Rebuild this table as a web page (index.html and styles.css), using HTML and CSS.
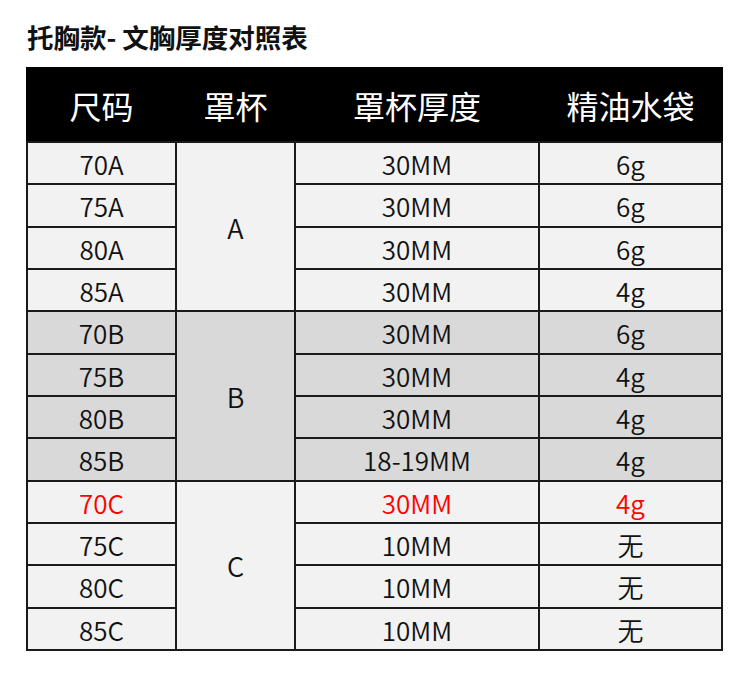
FILE: index.html
```html
<!DOCTYPE html>
<html lang="zh">
<head>
<meta charset="utf-8">
<link rel="stylesheet" href="styles.css">
</head>
<body>
<div class="page">
  <h1 class="title">托胸款- 文胸厚度对照表</h1>
  <table class="chart">
    <colgroup>
      <col class="c1"><col class="c2"><col class="c3"><col class="c4">
    </colgroup>
    <thead>
      <tr><th>尺码</th><th>罩杯</th><th>罩杯厚度</th><th>精油水袋</th></tr>
    </thead>
    <tbody class="grp-a">
      <tr><td>70A</td><td rowspan="4" class="cup">A</td><td>30MM</td><td>6g</td></tr>
      <tr><td>75A</td><td>30MM</td><td>6g</td></tr>
      <tr><td>80A</td><td>30MM</td><td>6g</td></tr>
      <tr><td>85A</td><td>30MM</td><td>4g</td></tr>
    </tbody>
    <tbody class="grp-b">
      <tr><td>70B</td><td rowspan="4" class="cup">B</td><td>30MM</td><td>6g</td></tr>
      <tr><td>75B</td><td>30MM</td><td>4g</td></tr>
      <tr><td>80B</td><td>30MM</td><td>4g</td></tr>
      <tr><td>85B</td><td>18-19MM</td><td>4g</td></tr>
    </tbody>
    <tbody class="grp-c">
      <tr><td class="hot">70C</td><td rowspan="4" class="cup">C</td><td class="hot">30MM</td><td class="hot">4g</td></tr>
      <tr><td>75C</td><td>10MM</td><td>无</td></tr>
      <tr><td>80C</td><td>10MM</td><td>无</td></tr>
      <tr><td>85C</td><td>10MM</td><td>无</td></tr>
    </tbody>
  </table>
</div>
</body>
</html>
```

FILE: styles.css
```css
html, body {
  margin: 0;
  padding: 0;
  background: #ffffff;
}

.page {
  padding: 18px 0 0 26px;
  font-family: "Noto Sans CJK SC", "Noto Sans", sans-serif;
  color: #111111;
}

.title {
  margin: 0 0 12px 1px;
  font-size: 26.5px;
  line-height: 37px;
  font-weight: 700;
  color: #111111;
}

.chart {
  border-collapse: collapse;
  table-layout: fixed;
  width: 695px;
}

.c1 { width: 149px; }
.c2 { width: 119px; }
.c3 { width: 244px; }
.c4 { width: 183px; }

.chart th {
  background: #000000;
  color: #ffffff;
  font-size: 32px;
  font-weight: 400;
  height: 72px;
  padding: 0;
  text-align: center;
  vertical-align: middle;
  border: 2px solid #000000;
  border-bottom-color: #1a1a1a;
}

.chart td {
  height: 38.33px;
  padding: 2px 0 0;
  text-align: center;
  vertical-align: middle;
  font-size: 26px;
  font-weight: 350;
  line-height: 28px;
  border: 2px solid #1a1a1a;
  color: #111111;
}

.grp-a td,
.grp-c td {
  background: #f2f2f2;
}

.grp-b td {
  background: #d9d9d9;
}

.chart td.cup {
  font-size: 27px;
}

.chart td.hot {
  color: #ff0000;
}
```
